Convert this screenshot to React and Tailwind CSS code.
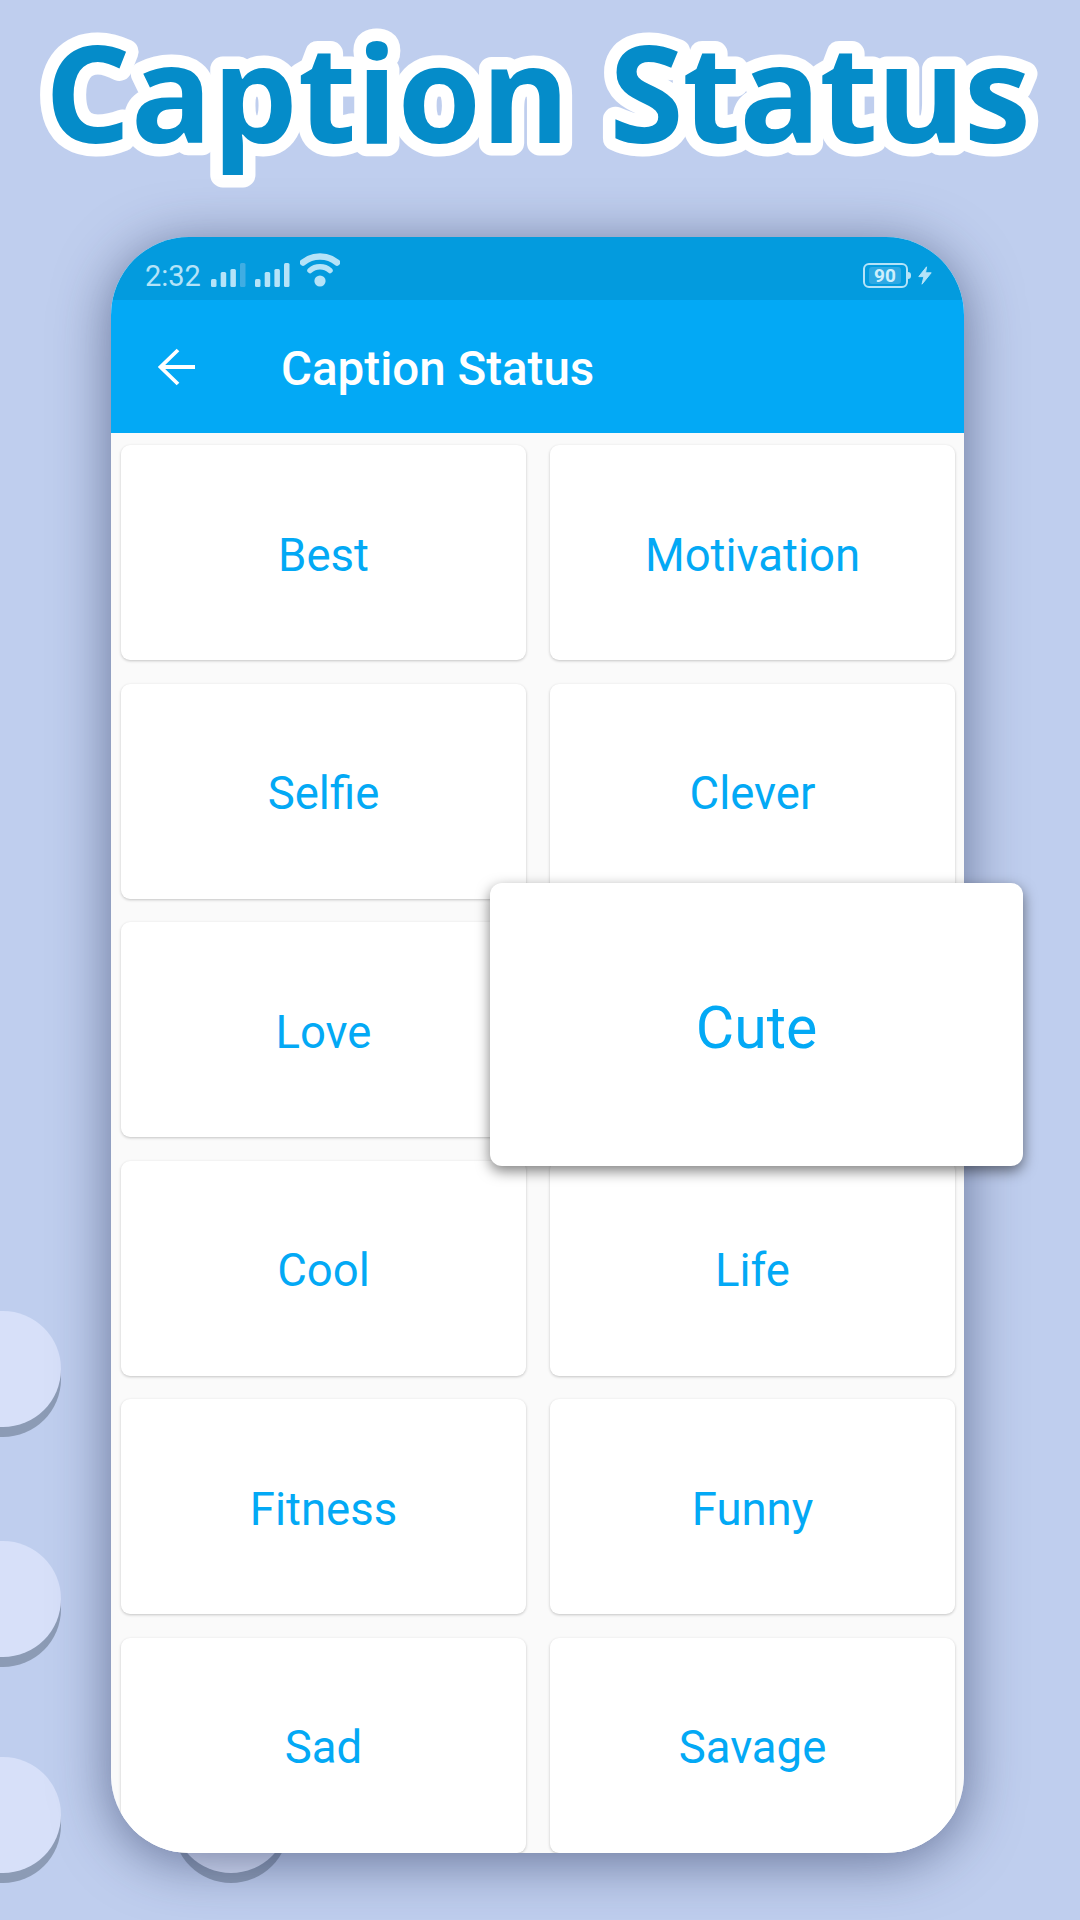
import React from "react";

const categories = ["Best", "Motivation", "Selfie", "Clever", "Love", "", "Cool", "Life", "Fitness", "Funny", "Sad", "Savage"];

function Dot({ className }) {
  return <div className={`absolute w-[116px] h-[116px] rounded-full bg-[#D7E0F9] shadow-[0_10px_0_#8C9BB5] ${className}`}></div>;
}

function SignalBars({ dim }) {
  return (
    <svg width="35" height="24" viewBox="0 0 35 24" className="block mt-[10px]">
      <rect x="0" y="16" width="5.5" height="8" rx="1.5" fill="#B5E3F8" />
      <rect x="9.7" y="9" width="5.5" height="15" rx="1.5" fill="#B5E3F8" />
      <rect x="19.4" y="6" width="5.5" height="18" rx="1.5" fill="#B5E3F8" />
      <rect x="29" y="0" width="5.5" height="24" rx="1.5" fill={dim ? "#3FADE3" : "#B5E3F8"} />
    </svg>
  );
}

function Wifi() {
  return (
    <svg width="40" height="35" viewBox="0 0 40 35" className="block mb-[1px]">
      <path d="M3 10.5C12.5 2.5 27.5 2.5 37 10.5" fill="none" stroke="#B5E3F8" strokeWidth="6.5" strokeLinecap="round" />
      <path d="M10 18.5C15.5 13.5 24.5 13.5 30 18.5" fill="none" stroke="#B5E3F8" strokeWidth="5.5" strokeLinecap="round" />
      <circle cx="20" cy="29" r="5.6" fill="#B5E3F8" />
    </svg>
  );
}

function Battery() {
  return (
    <div className="flex items-center mt-[10px]">
      <div className="w-[45px] h-[25px] rounded-[6px] border-2 border-[#B5E3F8] px-[4px] py-[2px] flex">
        <div className="flex-1 mr-[1px] rounded-[3px] bg-[#2EA9E4] flex items-center justify-center text-[19px] leading-none font-bold text-[#CFEFFC]">90</div>
      </div>
      <div className="w-[3px] h-[7px] rounded-r-full bg-[#B5E3F8]"></div>
    </div>
  );
}

function Bolt() {
  return (
    <svg width="14" height="19" viewBox="0 0 14 19" className="block mt-[11px]">
      <path d="M8.6 0.8L0.8 10.6H5.9L4 18.2L13.2 6.8H7.5L8.6 0.8Z" fill="#B5E3F8" stroke="#B5E3F8" strokeWidth="1" strokeLinejoin="round" />
    </svg>
  );
}

function BackArrow() {
  return (
    <svg width="38" height="38" viewBox="0 0 38 38" className="block">
      <path d="M38 19H3M21 2L3.5 19L21 36" fill="none" stroke="#fff" strokeWidth="3.8" />
    </svg>
  );
}

function Headline() {
  return (
    <svg width="1080" height="237" viewBox="0 0 1080 237" className="block">
      <text
        x="537"
        y="143"
        textAnchor="middle"
        fontFamily="'Open Sans', sans-serif"
        fontWeight="700"
        fontSize="135"
        wordSpacing="4.5"
        fill="#058CC9"
        stroke="#fff"
        strokeWidth="25"
        strokeLinejoin="round"
        paintOrder="stroke"
      >
        Caption <tspan letterSpacing="-1.5">Status</tspan>
      </text>
    </svg>
  );
}

export default function App() {
  return (
    <div className="relative w-[1080px] h-[1920px] overflow-hidden bg-[#BFCEEE] font-['Roboto',sans-serif]">
      {/* Background dots */}
      <Dot className="left-[-55px] top-[1311px]" />
      <Dot className="left-[-55px] top-[1541px]" />
      <Dot className="left-[-55px] top-[1757px]" />
      <Dot className="left-[173px] top-[1757px]" />

      <div className="relative h-[237px]">
        <Headline />
      </div>

      {/* Phone */}
      <div className="relative ml-[111px] w-[853px] h-[1616px] rounded-[78px] shadow-[0_8px_55px_rgba(30,40,80,0.55)]">
        <div className="w-full h-full rounded-[78px] overflow-hidden bg-[#FAFAFA]">
          <div className="h-[63px] bg-[#039BDE] flex items-center pl-[34px] pr-[32px] pt-[3px]">
            <span className="w-[66px] mt-[13px] text-[29px] leading-none text-[#B5E3F8]">2:32</span>
            <SignalBars dim />
            <div className="w-[9px]"></div>
            <SignalBars />
            <div className="w-[10px]"></div>
            <Wifi />
            <div className="flex-1"></div>
            <Battery />
            <div className="w-[7px]"></div>
            <Bolt />
          </div>
          <div className="h-[133px] bg-[#03A9F5] flex items-center pl-[46px]">
            <BackArrow />
            <span className="ml-[86px] pt-[6px] text-[47.5px] leading-none font-medium text-white">Caption Status</span>
          </div>
          <div className="grid grid-cols-[405px_405px] auto-rows-[215px] gap-x-[24px] gap-y-[23.5px] pl-[10px] pt-[12px]">
            {categories.map((name, i) => (
              <div key={i} className="bg-white rounded-[9px] shadow-[0_1px_3px_rgba(0,0,0,0.22)] flex items-center justify-center pt-[7px] text-[45.5px] text-[#03A9F5]">
                {name}
              </div>
            ))}
          </div>
        </div>
      </div>

      {/* Enlarged card */}
      <div className="absolute left-[490px] top-[883px] w-[533px] h-[283px] bg-white rounded-[12px] shadow-[0_5px_14px_rgba(0,0,0,0.5)] flex items-center justify-center pt-[7px] text-[59px] text-[#03A9F5]">
        Cute
      </div>
    </div>
  );
}
